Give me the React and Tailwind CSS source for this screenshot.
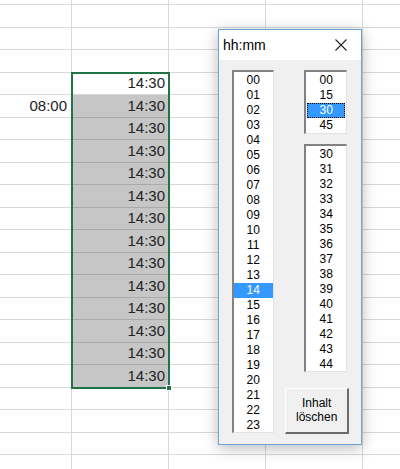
import React from 'react';

const ROWS = 22;
const COLS = 5;
const SEL_FIRST = 4;
const SEL_LAST = 17;

const hours = Array.from({ length: 24 }, (_, i) => String(i).padStart(2, '0'));
const quarters = ['00', '15', '30', '45'];
const minutes = Array.from({ length: 15 }, (_, i) => String(30 + i));

function Cell({ row, col }) {
  const inSel = col === 1 && row >= SEL_FIRST && row <= SEL_LAST;
  const active = inSel && row === SEL_FIRST;
  let text = '';
  if (inSel) text = '14:30';
  if (col === 0 && row === 5) text = '08:00';

  return (
    <div
      className={`flex h-full w-[97px] shrink-0 items-end justify-end border-r border-b pb-[1px] text-[15px] leading-[20px] text-[#222] ${
        inSel && !active ? 'bg-[#c6c6c6] border-b-[#aaaaaa] border-r-[#c6c6c6]' : 'border-[#d8d8d8]'
      } ${col === 0 ? 'pr-[4px]' : 'pr-[3px]'}`}
    >
      {text}
    </div>
  );
}

function ListBox({ items, selected, focus, className }) {
  return (
    <div
      className={`flex flex-col border-t-2 border-l-2 border-r border-b border-t-[#828282] border-l-[#828282] border-r-[#e3e3e3] border-b-[#e3e3e3] bg-white pt-[1px] ${className}`}
    >
      {items.map((it) => (
        <div
          key={it}
          className={`flex h-[15px] shrink-0 items-center justify-center text-[12px] leading-[15px] ${
            it === selected ? 'bg-[#3399ff] text-white' : 'text-black'
          } ${it === selected && focus ? 'outline outline-1 -outline-offset-1 outline-dotted outline-black mx-[1px]' : ''}`}
        >
          {it}
        </div>
      ))}
    </div>
  );
}

function Dialog() {
  return (
    <div className="absolute left-[218px] top-[29px] flex h-[416px] w-[144px] flex-col border border-[#6fa3d6] bg-[#f0f0f0] shadow-[0_3px_14px_rgba(0,0,0,0.28)]">
      <div className="flex h-[30px] shrink-0 items-center justify-between bg-white pl-[4px] pr-[14px]">
        <span className="text-[14px] text-black">hh:mm</span>
        <svg width="12" height="12" viewBox="0 0 12 12">
          <path d="M0.5 0.5 L11.5 11.5 M11.5 0.5 L0.5 11.5" stroke="#222" strokeWidth="1.1" fill="none" />
        </svg>
      </div>
      <div className="flex pl-[12.7px] pt-[9.7px]">
        <ListBox items={hours} selected="14" className="h-[363px] w-[42px]" />
        <div className="ml-[30.5px] flex w-[43px] flex-col">
          <ListBox items={quarters} selected="30" focus className="h-[64px] w-[43px]" />
          <ListBox items={minutes} className="mt-[10.6px] h-[228px] w-[43px]" />
          <button className="ml-[-19px] mt-[15.5px] flex h-[46px] w-[64px] flex-col items-center justify-center border-t border-l border-r-2 border-b-2 border-t-white border-l-white border-r-[#6b6b6b] border-b-[#6b6b6b] bg-[#f0f0f0] text-[12px] leading-[14.5px] text-black">
            <span>Inhalt</span>
            <span>löschen</span>
          </button>
        </div>
      </div>
    </div>
  );
}

export default function App() {
  return (
    <div
      className="relative h-[469px] w-[400px] overflow-hidden bg-white"
      style={{ fontFamily: '"Liberation Sans", Arial, sans-serif' }}
    >
      <div className="ml-[-25px] mt-[-17.5px] flex flex-col">
        {Array.from({ length: ROWS }, (_, r) => (
          <div key={r} className="flex h-[22.5px] shrink-0">
            {Array.from({ length: COLS }, (_, c) => (
              <Cell key={c} row={r} col={c} />
            ))}
          </div>
        ))}
      </div>
      <div className="absolute left-[70.5px] top-[72px] h-[316.5px] w-[99.5px] border-2 border-[#217346]" />
      <div className="absolute left-[166px] top-[385px] h-[6px] w-[6px] border border-white bg-[#217346]" />
      <Dialog />
    </div>
  );
}
